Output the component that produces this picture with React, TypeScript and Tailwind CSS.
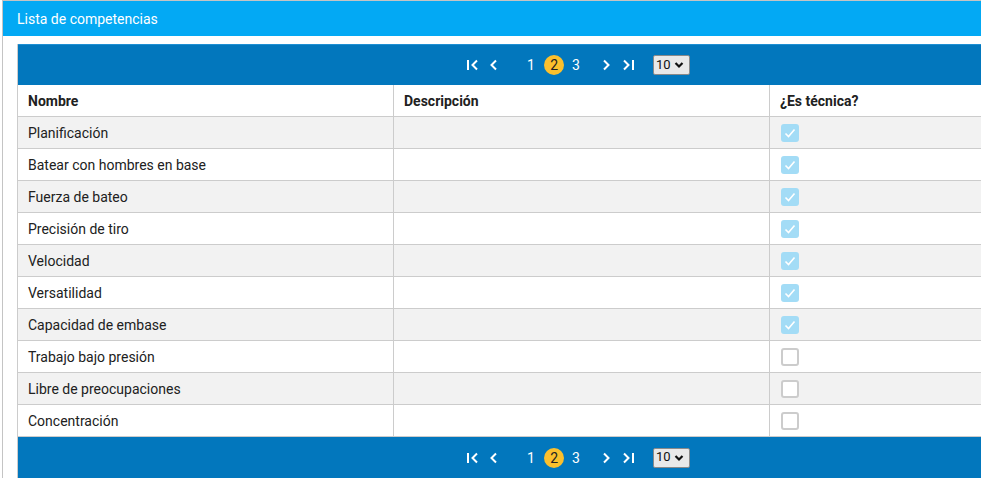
import React from 'react';

interface Competencia {
  nombre: string;
  descripcion: string;
  tecnica: boolean;
}

const competencias: Competencia[] = [
  { nombre: 'Planificación', descripcion: '', tecnica: true },
  { nombre: 'Batear con hombres en base', descripcion: '', tecnica: true },
  { nombre: 'Fuerza de bateo', descripcion: '', tecnica: true },
  { nombre: 'Precisión de tiro', descripcion: '', tecnica: true },
  { nombre: 'Velocidad', descripcion: '', tecnica: true },
  { nombre: 'Versatilidad', descripcion: '', tecnica: true },
  { nombre: 'Capacidad de embase', descripcion: '', tecnica: true },
  { nombre: 'Trabajo bajo presión', descripcion: '', tecnica: false },
  { nombre: 'Libre de preocupaciones', descripcion: '', tecnica: false },
  { nombre: 'Concentración', descripcion: '', tecnica: false },
];

const FirstIcon = () => (
  <svg width="14" height="12" viewBox="0 0 14 12" fill="none" stroke="white" strokeWidth="2">
    <path d="M2 1v10" />
    <path d="M11 1.5L6.5 6l4.5 4.5" />
  </svg>
);

const PrevIcon = () => (
  <svg width="9" height="12" viewBox="0 0 9 12" fill="none" stroke="white" strokeWidth="2">
    <path d="M7 1.5L2.5 6 7 10.5" />
  </svg>
);

const NextIcon = () => (
  <svg width="9" height="12" viewBox="0 0 9 12" fill="none" stroke="white" strokeWidth="2">
    <path d="M2 1.5L6.5 6 2 10.5" />
  </svg>
);

const LastIcon = () => (
  <svg width="14" height="12" viewBox="0 0 14 12" fill="none" stroke="white" strokeWidth="2">
    <path d="M3 1.5L7.5 6 3 10.5" />
    <path d="M12 1v10" />
  </svg>
);

const Pager = ({ top }: { top?: boolean }) => (
  <div
    className={`h-[41px] bg-[#0277bd] flex items-center justify-center pr-[8px] ${top ? 'border-t border-[#1e8fd3]' : ''}`}
  >
    <div className="flex items-center text-white text-sm">
      <span className="flex items-center"><FirstIcon /></span>
      <span className="flex items-center ml-[9px]"><PrevIcon /></span>
      <span className="ml-[29px] w-[7px]">1</span>
      <span className="ml-[10px] w-5 h-5 rounded-full bg-[#fbc02d] text-[#222] flex items-center justify-center">2</span>
      <span className="ml-[8px]">3</span>
      <span className="flex items-center ml-[22px]"><NextIcon /></span>
      <span className="flex items-center ml-[10px]"><LastIcon /></span>
      <div className="ml-[18px] w-[37px] h-[20px] bg-[#e9e9e9] border border-[#8a8a8a] rounded-[2px] flex items-center pl-[2px] text-[#111] text-[13px]">
        <span>10</span>
        <svg className="ml-[3px]" width="10" height="8" viewBox="0 0 10 8" fill="none" stroke="#111" strokeWidth="2.2">
          <path d="M1.5 2l3.5 3.5L8.5 2" />
        </svg>
      </div>
    </div>
  </div>
);

const Checkbox = ({ checked }: { checked: boolean }) =>
  checked ? (
    <div className="w-[18px] h-[18px] rounded-[3px] bg-[#a3dcf6] flex items-center justify-center">
      <svg width="12" height="10" viewBox="0 0 12 10" fill="none" stroke="white" strokeWidth="1.6">
        <path d="M1.5 5.5l3 3 6-7" />
      </svg>
    </div>
  ) : (
    <div className="w-[18px] h-[18px] rounded-[3px] border-2 border-[#cccccc] bg-white" />
  );

export default function App() {
  return (
    <div
      className="w-[981px] h-[478px] overflow-hidden bg-white pl-[2px] text-sm text-[#212121]"
      style={{ fontFamily: 'Roboto, "Liberation Sans", sans-serif' }}
    >
      <div className="w-[1160px] border-l border-t border-[#c4c4c4] h-full">
        <div className="h-[35px] bg-[#03a9f4] text-white flex items-center px-[14px] text-sm">
          Lista de competencias
        </div>
        <div className="pt-[8px] pl-[14px]">
          <div className="w-[1129px] border-l border-[#cccccc]">
            <Pager top />
            <div className="grid grid-cols-[375px_376px_377px] h-[31px] font-bold bg-white">
              <div className="flex items-center pl-[10px]">Nombre</div>
              <div className="flex items-center pl-[10px] border-l border-[#cccccc]">Descripción</div>
              <div className="flex items-center pl-[10px] border-l border-[#cccccc]">¿Es técnica?</div>
            </div>
            {competencias.map((c, i) => (
              <div
                key={c.nombre}
                className={`grid grid-cols-[375px_376px_377px] h-8 border-t border-[#cccccc] ${i % 2 === 0 ? 'bg-[#f2f2f2]' : 'bg-white'} ${i === competencias.length - 1 ? 'h-[33px] border-b' : ''}`}
              >
                <div className="flex items-center pl-[10px]">{c.nombre}</div>
                <div className="flex items-center pl-[10px] border-l border-[#cccccc]">{c.descripcion}</div>
                <div className="flex items-center pl-[11px] border-l border-[#cccccc]">
                  <Checkbox checked={c.tecnica} />
                </div>
              </div>
            ))}
            <Pager />
          </div>
        </div>
      </div>
    </div>
  );
}
